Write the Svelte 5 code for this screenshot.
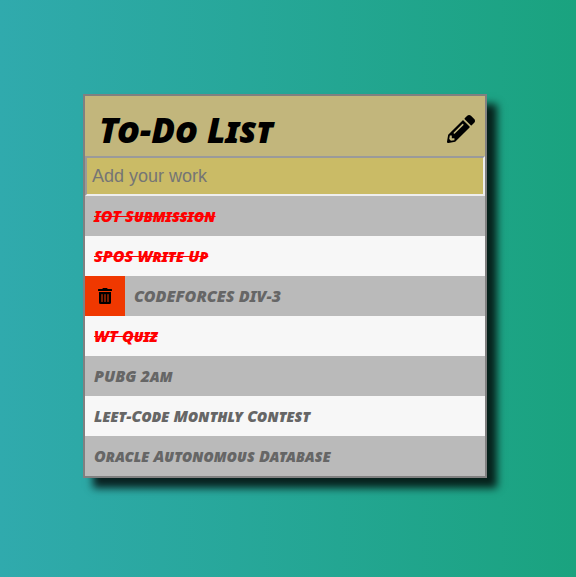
<script>
  let draft = $state('');
  let inputShown = $state(true);
  let revealed = $state(3);
  let nextId = 8;
  let todos = $state([
    { id: 1, text: 'IOT Submission', done: true },
    { id: 2, text: 'SPOS Write Up', done: true },
    { id: 3, text: 'CODEFORCES DIV-3', done: false },
    { id: 4, text: 'WT Quiz', done: true },
    { id: 5, text: 'PUBG 2am', done: false },
    { id: 6, text: 'Leet-Code Monthly Contest', done: false },
    { id: 7, text: 'Oracle Autonomous Database', done: false }
  ]);

  function add(event) {
    event.preventDefault();
    if (!draft.trim()) return;
    todos.push({ id: nextId++, text: draft.trim(), done: false });
    draft = '';
  }

  function remove(id) {
    todos = todos.filter((todo) => todo.id !== id);
  }
</script>

<main>
  <section class="card">
    <header>
      <h1>To-Do List</h1>
      <button class="toggle" aria-label="Toggle input" onclick={() => (inputShown = !inputShown)}>
        <svg viewBox="0 0 512 512" aria-hidden="true">
          <path d="M497.9 142.1l-46.1 46.1c-4.7 4.7-12.3 4.7-17 0l-111-111c-4.7-4.7-4.7-12.3 0-17l46.1-46.1c18.7-18.7 49.1-18.7 67.9 0l60.1 60.1c18.8 18.7 18.8 49.1 0 67.9zM284.2 99.8L21.6 362.4.4 483.9c-2.9 16.4 11.4 30.6 27.8 27.8l121.5-21.3 262.6-262.6c4.7-4.7 4.7-12.3 0-17l-111-111c-4.8-4.7-12.4-4.7-17.1 0zM124.1 339.9c-5.5-5.5-5.5-14.3 0-19.8l154-154c5.5-5.5 14.3-5.5 19.8 0s5.5 14.3 0 19.8l-154 154c-5.5 5.5-14.3 5.5-19.8 0zM88 424h48v36.3l-64.5 11.3-31.1-31.1L51.7 376H88v48z" />
        </svg>
      </button>
    </header>
    {#if inputShown}
      <form onsubmit={add}>
        <input type="text" aria-label="Add your work" placeholder="Add your work" bind:value={draft} />
      </form>
    {/if}
    <ul>
      {#each todos as todo (todo.id)}
        <li onmouseenter={() => (revealed = todo.id)}>
          {#if revealed === todo.id}
            <button class="delete" aria-label="Delete {todo.text}" onclick={() => remove(todo.id)}>
              <svg viewBox="0 0 448 512" aria-hidden="true">
                <path d="M32 464a48 48 0 0 0 48 48h288a48 48 0 0 0 48-48V128H32zm272-256a16 16 0 0 1 32 0v224a16 16 0 0 1-32 0zm-96 0a16 16 0 0 1 32 0v224a16 16 0 0 1-32 0zm-96 0a16 16 0 0 1 32 0v224a16 16 0 0 1-32 0zM432 32H312l-9.4-18.7A24 24 0 0 0 281.1 0H166.8a23.7 23.7 0 0 0-21.4 13.3L136 32H16A16 16 0 0 0 0 48v32a16 16 0 0 0 16 16h416a16 16 0 0 0 16-16V48a16 16 0 0 0-16-16z" />
              </svg>
            </button>
          {/if}
          <button class="item" class:done={todo.done} onclick={() => (todo.done = !todo.done)}>{todo.text}</button>
        </li>
      {/each}
    </ul>
  </section>
</main>

<style>
  main {
    box-sizing: border-box;
    min-height: 100vh;
    display: flex;
    align-items: center;
    justify-content: center;
    padding: 0 6px 5px 0;
    background: linear-gradient(to right, #30aaad, #1aa37f);
  }

  .card {
    width: 100%;
    max-width: 400px;
    border: 2px solid #808080;
    background: #f7f7f7;
    box-shadow: 10px 10px 8px rgba(0, 0, 0, 0.8);
  }

  header {
    display: flex;
    align-items: center;
    justify-content: space-between;
    height: 60px;
    padding: 0 10px 0 14px;
    background: #c2b67c;
  }

  h1,
  .item {
    font-family: 'Permanent Marker', 'Noto Sans', sans-serif;
    font-style: italic;
    font-weight: 900;
    font-variant: small-caps;
  }

  h1 {
    margin: 0;
    padding-top: 8px;
    font-size: 35px;
    line-height: 44px;
    color: #000;
  }

  button {
    margin: 0;
    padding: 0;
    border: 0;
    background: none;
    cursor: pointer;
  }

  svg {
    display: block;
    fill: #000;
  }

  .toggle {
    padding-top: 6px;
  }

  .toggle svg {
    width: 28px;
    height: 28px;
  }

  input {
    display: block;
    box-sizing: border-box;
    width: 100%;
    height: 40px;
    padding: 0 5px;
    border: 2px solid;
    border-color: #9a9a9a #eee #eee #9a9a9a;
    border-radius: 0;
    outline: none;
    background: #cabb66;
    font-family: 'Liberation Sans', Arial, sans-serif;
    font-size: 18px;
    color: #444;
  }

  input::placeholder {
    color: #757575;
    opacity: 1;
  }

  ul {
    margin: 0;
    padding: 0;
    list-style: none;
  }

  li {
    display: flex;
    height: 40px;
    background: #f7f7f7;
  }

  li:nth-child(odd) {
    background: #bababa;
  }

  .delete {
    display: flex;
    flex: none;
    align-items: center;
    justify-content: center;
    width: 40px;
    background: #f03800;
  }

  .delete svg {
    width: 14px;
    height: 16px;
  }

  .item {
    flex: 1;
    padding: 0 9px;
    font-size: 16px;
    line-height: 40px;
    text-align: left;
    color: #666;
  }

  .done {
    color: #f00;
    text-decoration: line-through;
  }
</style>
